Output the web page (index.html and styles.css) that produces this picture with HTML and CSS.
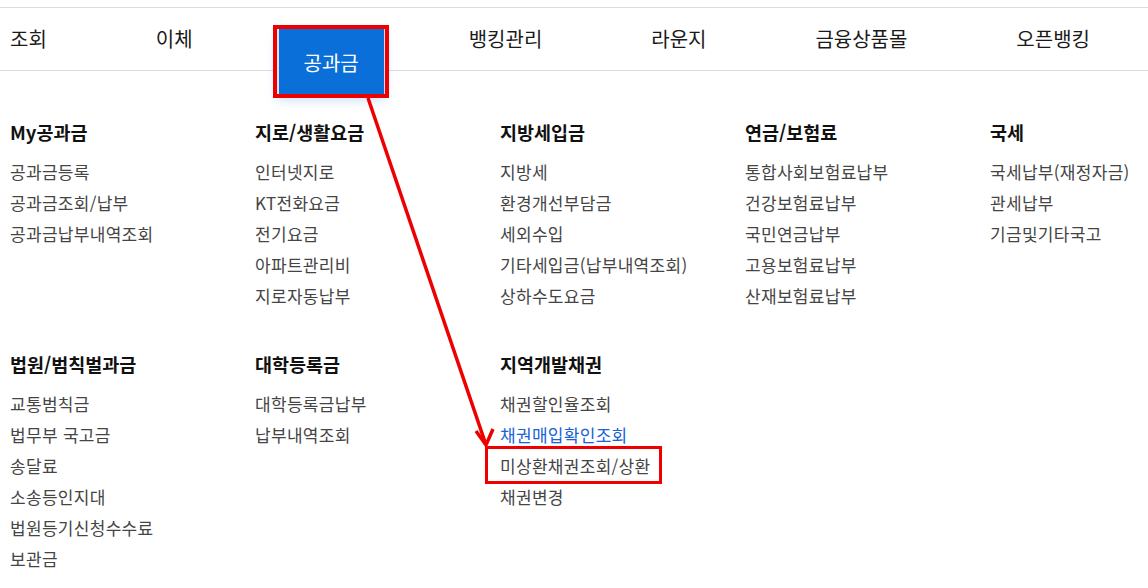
FILE: index.html
```html
<!DOCTYPE html>
<html lang="ko">
<head>
<meta charset="utf-8">
<title>공과금 메뉴</title>
<link rel="stylesheet" href="styles.css">
</head>
<body>
<div class="page">
  <nav class="gnb">
    <a class="gnb-item">조회</a>
    <a class="gnb-item">이체</a>
    <a class="gnb-item is-active">공과금</a>
    <a class="gnb-item">뱅킹관리</a>
    <a class="gnb-item">라운지</a>
    <a class="gnb-item">금융상품몰</a>
    <a class="gnb-item">오픈뱅킹</a>
  </nav>

  <div class="menu">
    <section class="group">
      <h3 class="group-title">My공과금</h3>
      <ul class="links">
        <li>공과금등록</li>
        <li>공과금조회/납부</li>
        <li>공과금납부내역조회</li>
      </ul>
    </section>
    <section class="group">
      <h3 class="group-title">지로/생활요금</h3>
      <ul class="links">
        <li>인터넷지로</li>
        <li>KT전화요금</li>
        <li>전기요금</li>
        <li>아파트관리비</li>
        <li>지로자동납부</li>
      </ul>
    </section>
    <section class="group">
      <h3 class="group-title">지방세입금</h3>
      <ul class="links">
        <li>지방세</li>
        <li>환경개선부담금</li>
        <li>세외수입</li>
        <li>기타세입금(납부내역조회)</li>
        <li>상하수도요금</li>
      </ul>
    </section>
    <section class="group">
      <h3 class="group-title">연금/보험료</h3>
      <ul class="links">
        <li>통합사회보험료납부</li>
        <li>건강보험료납부</li>
        <li>국민연금납부</li>
        <li>고용보험료납부</li>
        <li>산재보험료납부</li>
      </ul>
    </section>
    <section class="group">
      <h3 class="group-title">국세</h3>
      <ul class="links">
        <li>국세납부(재정자금)</li>
        <li>관세납부</li>
        <li>기금및기타국고</li>
      </ul>
    </section>

    <section class="group">
      <h3 class="group-title">법원/범칙벌과금</h3>
      <ul class="links">
        <li>교통범칙금</li>
        <li>법무부 국고금</li>
        <li>송달료</li>
        <li>소송등인지대</li>
        <li>법원등기신청수수료</li>
        <li>보관금</li>
      </ul>
    </section>
    <section class="group">
      <h3 class="group-title">대학등록금</h3>
      <ul class="links">
        <li>대학등록금납부</li>
        <li>납부내역조회</li>
      </ul>
    </section>
    <section class="group">
      <h3 class="group-title">지역개발채권</h3>
      <ul class="links">
        <li>채권할인율조회</li>
        <li class="is-current">채권매입확인조회</li>
        <li><span class="marked">미상환채권조회/상환</span></li>
        <li>채권변경</li>
      </ul>
    </section>
  </div>

  <svg class="arrow" width="1148" height="588" viewBox="0 0 1148 588" aria-hidden="true">
    <line x1="368" y1="98" x2="485" y2="442" stroke="#ee0000" stroke-width="3.5"/>
    <polyline points="476,431 486,445 493,429" fill="none" stroke="#ee0000" stroke-width="3.5" stroke-linejoin="miter"/>
  </svg>
</div>
</body>
</html>
```

FILE: styles.css
```css
* { box-sizing: border-box; }

html, body {
  margin: 0;
  padding: 0;
  background: #fff;
}

body {
  font-family: "Noto Sans CJK KR", "Noto Sans", sans-serif;
  color: #222;
  width: 1148px;
  height: 588px;
  overflow: hidden;
}

.page {
  position: relative;
  width: 1148px;
  height: 588px;
  overflow: hidden;
}

/* top navigation */
.gnb {
  margin-top: 7px;
  height: 64px;
  border-top: 1px solid #dcdcdc;
  border-bottom: 1px solid #dcdcdc;
  display: flex;
  align-items: center;
  justify-content: space-between;
  padding: 0 58px 0 10px;
}

.gnb-item {
  font-size: 20px;
  line-height: 26px;
  color: #1a1a1a;
  white-space: nowrap;
}

.gnb-item.is-active {
  position: relative;
  z-index: 2;
  align-self: flex-start;
  margin: 21px -25px 0;
  padding: 3px 25px 0;
  height: 65px;
  display: flex;
  align-items: center;
  justify-content: center;
  background: #0a6fd9;
  color: #fff;
  border-left: 2px solid #d6e6fa;
  border-right: 1px solid #c9dcf5;
  outline: 4px solid #ee0000;
  box-shadow: 0 6px 10px rgba(10, 111, 217, 0.22);
}

/* mega menu */
.menu {
  display: grid;
  grid-template-columns: repeat(4, 245px) 1fr;
  row-gap: 41px;
  padding: 49px 0 0 10px;
}

.group-title {
  margin: 0 0 12px;
  font-size: 18.5px;
  line-height: 24px;
  font-weight: 700;
  color: #111;
  white-space: nowrap;
}

.links {
  list-style: none;
  margin: 0;
  padding: 0;
}

.links li {
  font-size: 17px;
  letter-spacing: 0.3px;
  line-height: 31px;
  color: #454545;
  white-space: nowrap;
}

.links li.is-current {
  color: #1864d6;
}

.marked {
  position: relative;
}

.marked::after {
  content: "";
  position: absolute;
  left: -15px;
  right: -12px;
  top: -7px;
  bottom: -6px;
  border: 3.5px solid #ee0000;
  pointer-events: none;
}

.arrow {
  position: absolute;
  left: 0;
  top: 0;
  pointer-events: none;
  z-index: 3;
}
```
